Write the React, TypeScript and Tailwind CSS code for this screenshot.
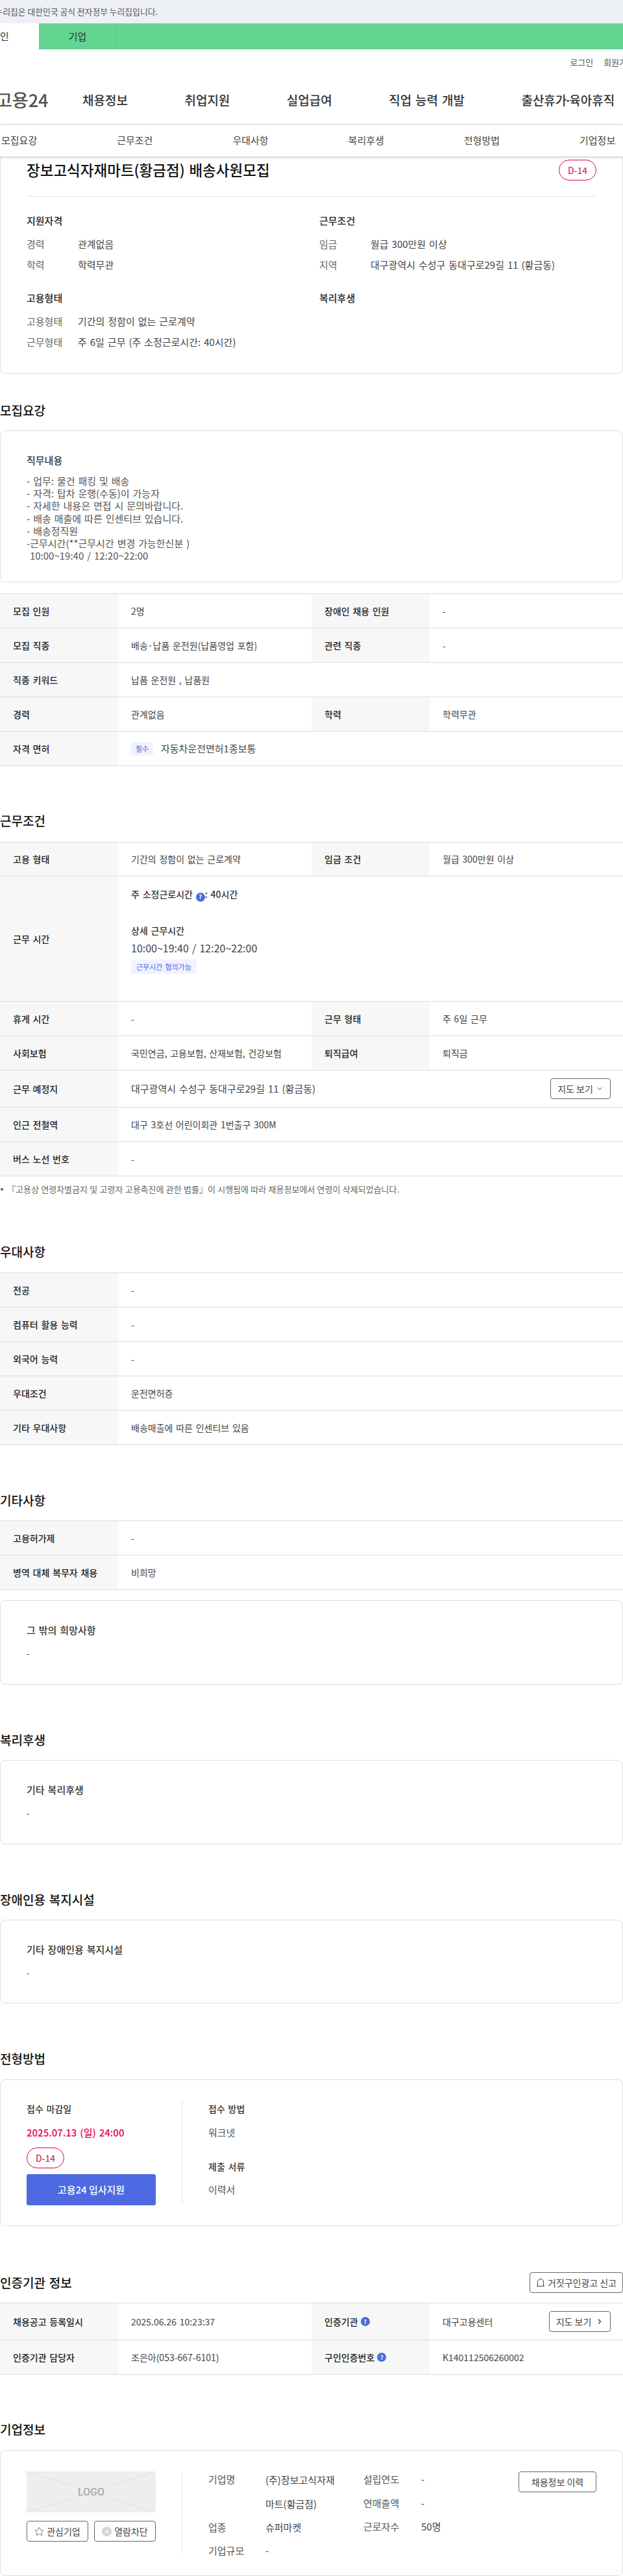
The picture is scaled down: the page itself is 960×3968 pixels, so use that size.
import type { ReactNode } from 'react'
import { ChevronDown, ChevronRight, Star } from 'lucide-react'

const KR = "font-['Noto_Sans_CJK_KR','Noto_Sans',sans-serif]"

const GNB = ['채용정보', '취업지원', '실업급여', '직업 능력 개발']
const TABS = ['모집요강', '근무조건', '우대사항', '복리후생', '전형방법', '기업정보']

function Help() {
  return (
    <span className="inline-flex h-[14px] w-[14px] items-center justify-center rounded-full bg-[#4e69e2] align-[-2px] text-[9px] font-bold leading-none text-white">?</span>
  )
}

function Heading({ children, className }: { children: ReactNode; className: string }) {
  return <h2 className={`h-[28px] text-[19px] font-medium leading-[28px] text-[#111] ${className}`}>{children}</h2>
}

function Label({ children }: { children: ReactNode }) {
  return <div className="flex items-center bg-[#f7f7f7] pl-[20px] text-[14px] font-medium text-[#222]">{children}</div>
}

function Value({ children }: { children: ReactNode }) {
  return <div className="flex items-center pl-[20px] text-[14px] text-[#444]">{children}</div>
}

function Row2({ a, b, c, d, h = 'h-[53px]' }: { a: ReactNode; b: ReactNode; c: ReactNode; d: ReactNode; h?: string }) {
  return (
    <div className={`grid grid-cols-[182px_298px_182px_298px] border-b border-[#dedede] ${h}`}>
      <Label>{a}</Label>
      <Value>{b}</Value>
      <Label>{c}</Label>
      <Value>{d}</Value>
    </div>
  )
}

function Row1({ a, children, h = 'h-[53px]' }: { a: ReactNode; children: ReactNode; h?: string }) {
  return (
    <div className={`grid grid-cols-[182px_778px] border-b border-[#dedede] ${h}`}>
      <Label>{a}</Label>
      <Value>{children}</Value>
    </div>
  )
}

function InfoLine({ k, children }: { k: string; children: ReactNode }) {
  return (
    <div className="flex h-[32px] items-center text-[15px]">
      <span className="w-[79px] text-[#666]">{k}</span>
      <span className="text-[#444]">{children}</span>
    </div>
  )
}

function TextCard({ title, h }: { title: string; h: string }) {
  return (
    <div className={`rounded-[8px] border border-[#dedede] px-[40px] pt-[34px] ${h}`}>
      <p className="h-[22px] text-[15px] font-medium leading-[22px] text-[#333]">{title}</p>
      <p className="mt-[13px] text-[14px] leading-[22px] text-[#555]">-</p>
    </div>
  )
}

function Dday({ className }: { className: string }) {
  return (
    <span className={`flex h-[32px] w-[58px] items-center justify-center rounded-[16px] border border-[#e6004e] text-[14px] text-[#e6004e] ${className}`}>D-14</span>
  )
}

function OutlineBtn({ children, className }: { children: ReactNode; className: string }) {
  return (
    <button className={`flex h-[32px] items-center justify-center rounded-[4px] border border-[#666] bg-white text-[14px] text-[#444] ${className}`}>{children}</button>
  )
}

function LogoBox() {
  return (
    <div className="relative flex h-[63px] w-[199px] items-center justify-center bg-[#eeeeee]">
      <svg className="absolute inset-0 h-full w-full" viewBox="0 0 199 63" preserveAspectRatio="none">
        <path d="M0 0L199 63M199 0L0 63" stroke="#dddddd" strokeWidth="1" />
      </svg>
      <span className="relative bg-[#eeeeee] px-[7px] font-['Roboto',sans-serif] text-[16px] font-medium leading-[20px] text-[#aaaaaa]">LOGO</span>
    </div>
  )
}

export default function App() {
  return (
    <div className={`w-[960px] overflow-hidden bg-white [word-spacing:0.1em] ${KR}`}>
      <div className="flex h-[36px] items-center overflow-hidden bg-[#edf0f5] [word-spacing:0]">
        <span className="ml-[-7.5px] whitespace-nowrap text-[12.8px] text-[#555]">누리집은 대한민국 공식 전자정부 누리집입니다.</span>
      </div>
      <div className="flex h-[40px] bg-[#62d591] text-[15px] text-[#333]">
        <div className="flex w-[60px] items-center bg-white">인</div>
        <div className="flex w-[120px] items-center justify-center border-r border-[#57c785]">기업</div>
      </div>

      <div className="flex h-[40px] items-center justify-end gap-[16px] text-[13px] text-[#555]">
        <span>로그인</span>
        <span className="mr-[-18px] whitespace-nowrap">회원가입</span>
      </div>
      <div className="flex h-[76px] items-start border-b border-[#e5e5e5] pt-[14px]">
        <span className="ml-[-6px] w-[133px] whitespace-nowrap text-[27px] font-medium leading-[48px] text-[#555]">고용24</span>
        <nav className="flex gap-[87.5px] text-[19px] font-medium leading-[48px] text-[#333]">
          {GNB.map((m) => (
            <span key={m} className="whitespace-nowrap">{m}</span>
          ))}
          <span className="whitespace-nowrap">출산휴가<span className="mx-[-3.5px]">·</span>육아휴직</span>
        </nav>
      </div>
      <div className="relative z-10 flex h-[49px] items-center gap-[123px] bg-white pl-[2px] text-[15px] text-[#444] shadow-[0_1px_4px_rgba(0,0,0,0.25)]">
        {TABS.map((t) => (
          <span key={t} className="whitespace-nowrap">{t}</span>
        ))}
      </div>

      <section className="h-[335px] rounded-b-[8px] border border-t-0 border-[#dedede] px-[40px] pt-[5px]">
        <div className="flex h-[57px] items-start justify-between border-b border-[#e5e5e5]">
          <h1 className="text-[22.5px] font-medium leading-[30px] text-[#111]">장보고식자재마트(황금점) 배송사원모집</h1>
          <Dday className="" />
        </div>
        <div className="mt-[26px] grid grid-cols-[451px_427px]">
          <div>
            <h3 className="mb-[9px] h-[22px] text-[15px] font-medium leading-[22px] text-[#222]">지원자격</h3>
            <InfoLine k="경력">관계없음</InfoLine>
            <InfoLine k="학력">학력무관</InfoLine>
            <h3 className="mb-[9px] mt-[24px] h-[22px] text-[15px] font-medium leading-[22px] text-[#222]">고용형태</h3>
            <InfoLine k="고용형태">기간의 정함이 없는 근로계약</InfoLine>
            <InfoLine k="근무형태">주 6일 근무 (주 소정근로시간: 40시간)</InfoLine>
          </div>
          <div>
            <h3 className="mb-[9px] h-[22px] text-[15px] font-medium leading-[22px] text-[#222]">근무조건</h3>
            <InfoLine k="임금">월급 300만원 이상</InfoLine>
            <InfoLine k="지역">대구광역시 수성구 동대구로29길 11 (황금동)</InfoLine>
            <h3 className="mt-[24px] h-[22px] text-[15px] font-medium leading-[22px] text-[#222]">복리후생</h3>
          </div>
        </div>
      </section>

      <Heading className="mt-[42px] mb-[17px]">모집요강</Heading>
      <section className="h-[234px] rounded-[8px] border border-[#dedede] px-[40px] pt-[34px]">
        <h3 className="h-[22px] text-[15px] font-medium leading-[22px] text-[#333]">직무내용</h3>
        <p className="mt-[11px] whitespace-pre-wrap text-[15px] leading-[19.2px] text-[#555]">{`- 업무: 물건 패킹 및 배송
- 자격: 탑차 운행(수동)이 가능자
- 자세한 내용은 면접 시 문의바랍니다.
- 배송 매출에 따른 인센티브 있습니다.
- 배송정직원
-근무시간(**근무시간 변경 가능한신분 )
 10:00~19:40 / 12:20~22:00`}</p>
      </section>

      <div className="mt-[17px] border-t border-[#dedede]">
        <Row2 a="모집 인원" b="2명" c="장애인 채용 인원" d="-" />
        <Row2 a="모집 직종" b="배송·납품 운전원(납품영업 포함)" c="관련 직종" d="-" />
        <Row1 a="직종 키워드">납품 운전원 , 납품원</Row1>
        <Row2 a="경력" b="관계없음" c="학력" d="학력무관" />
        <Row1 a="자격 면허">
          <span className="mr-[12px] flex h-[21px] w-[34px] items-center justify-center rounded-[4px] bg-[#f0f2fd] text-[11px] text-[#4e69e2]">필수</span>
          <span className="text-[15px]">자동차운전면허1종보통</span>
        </Row1>
      </div>

      <Heading className="mt-[70px] mb-[19px]">근무조건</Heading>
      <div className="border-t border-[#dedede]">
        <Row2 a="고용 형태" b="기간의 정함이 없는 근로계약" c="임금 조건" d="월급 300만원 이상" h="h-[52px]" />
        <div className="grid h-[193px] grid-cols-[182px_778px] border-b border-[#dedede]">
          <Label>근무 시간</Label>
          <div className="pl-[20px] pt-[16px] text-[14px] text-[#333]">
            <p className="h-[22px] font-medium leading-[22px]">주 소정근로시간 <Help />: 40시간</p>
            <p className="mt-[34px] h-[22px] font-medium leading-[22px]">상세 근무시간</p>
            <p className="mt-[5px] h-[22px] text-[16px] leading-[22px] text-[#444]">10:00~19:40 / 12:20~22:00</p>
            <span className="mt-[7px] inline-flex h-[22px] w-[101px] items-center justify-center rounded-[4px] bg-[#f0f2fd] text-[11px] text-[#4e69e2]">근무시간 협의가능</span>
          </div>
        </div>
        <Row2 a="휴게 시간" b="-" c="근무 형태" d="주 6일 근무" />
        <Row2 a="사회보험" b="국민연금, 고용보험, 산재보험, 건강보험" c="퇴직급여" d="퇴직금" />
        <div className="grid h-[57px] grid-cols-[182px_778px] border-b border-[#dedede]">
          <Label>근무 예정지</Label>
          <div className="flex items-center justify-between pl-[20px] pr-[19px] text-[15px] text-[#444]">
            대구광역시 수성구 동대구로29길 11 (황금동)
            <OutlineBtn className="w-[93px] gap-[4px]">지도 보기 <ChevronDown size={12} /></OutlineBtn>
          </div>
        </div>
        <Row1 a="인근 전철역">대구 3호선 어린이회관 1번출구 300M</Row1>
        <Row1 a="버스 노선 번호">-</Row1>
      </div>
      <p className="mt-[10px] flex h-[20px] items-center gap-[6px] whitespace-nowrap pl-[1px] text-[13px] leading-[20px] text-[#666] [word-spacing:0.03em]">
        <span className="h-[4px] w-[4px] rounded-full bg-[#666]" />
        『고용상 연령차별금지 및 고령자 고용촉진에 관한 법률』이 시행됨에 따라 채용정보에서 연령이 삭제되었습니다.
      </p>

      <Heading className="mt-[72px] mb-[18px]">우대사항</Heading>
      <div className="border-t border-[#dedede]">
        <Row1 a="전공">-</Row1>
        <Row1 a="컴퓨터 활용 능력">-</Row1>
        <Row1 a="외국어 능력">-</Row1>
        <Row1 a="우대조건">운전면허증</Row1>
        <Row1 a="기타 우대사항">배송매출에 따른 인센티브 있음</Row1>
      </div>

      <Heading className="mt-[71px] mb-[17px]">기타사항</Heading>
      <div className="border-t border-[#dedede]">
        <Row1 a="고용허가제">-</Row1>
        <Row1 a="병역 대체 복무자 채용">비희망</Row1>
      </div>
      <div className="mt-[16px]"><TextCard title="그 밖의 희망사항" h="h-[130px]" /></div>

      <Heading className="mt-[71px] mb-[17px]">복리후생</Heading>
      <TextCard title="기타 복리후생" h="h-[130px]" />

      <Heading className="mt-[71px] mb-[17px]">장애인용 복지시설</Heading>
      <TextCard title="기타 장애인용 복지시설" h="h-[129px]" />

      <Heading className="mt-[71px] mb-[18px]">전형방법</Heading>
      <section className="flex h-[226px] rounded-[8px] border border-[#dedede] pl-[40px] pt-[31px]">
        <div className="h-[161px] w-[240px] border-r border-[#e5e5e5]">
          <p className="mt-[2px] h-[22px] text-[14px] font-medium leading-[22px] text-[#333]">접수 마감일</p>
          <p className="mt-[15px] h-[22px] text-[15px] font-medium leading-[22px] text-[#e6004e]">2025.07.13 (일) 24:00</p>
          <Dday className="mt-[12px]" />
          <button className="mt-[9px] h-[48px] w-[199px] rounded-[3px] bg-[#4e69e2] text-[15px] font-medium text-white">고용24 입사지원</button>
        </div>
        <div className="pl-[40px] text-[15px]">
          <p className="mt-[2px] h-[22px] text-[14px] font-medium leading-[22px] text-[#333]">접수 방법</p>
          <p className="mt-[15px] h-[22px] leading-[22px] text-[#555]">워크넷</p>
          <p className="mt-[30px] h-[22px] text-[14px] font-medium leading-[22px] text-[#333]">제출 서류</p>
          <p className="mt-[14px] h-[22px] leading-[22px] text-[#555]">이력서</p>
        </div>
      </section>

      <div className="mt-[71px] mb-[15px] flex h-[32px] items-center justify-between">
        <h2 className="text-[19px] font-medium leading-[28px] text-[#111]">인증기관 정보</h2>
        <OutlineBtn className="w-[144px] gap-[4px]">
          <svg width="14" height="14" viewBox="0 0 14 14" fill="none" stroke="#444" strokeWidth="1">
            <path d="M1 12.5h12M2.5 12.5V6a4.5 4.5 0 0 1 9 0v6.5M7 1.5V.5" />
          </svg>
          거짓구인광고 신고
        </OutlineBtn>
      </div>
      <div className="border-t border-[#dedede]">
        <div className="grid h-[57px] grid-cols-[182px_298px_182px_298px] border-b border-[#dedede]">
          <Label>채용공고 등록일시</Label>
          <Value>2025.06.26 10:23:37</Value>
          <Label><span className="mr-[4px]">인증기관</span><Help /></Label>
          <div className="flex items-center justify-between pl-[20px] pr-[19px] text-[14px] text-[#444]">
            대구고용센터
            <OutlineBtn className="w-[95px] gap-[7px]">지도 보기 <ChevronRight size={12} strokeWidth={3} /></OutlineBtn>
          </div>
        </div>
        <Row2
          a="인증기관 담당자"
          b="조은아(053-667-6101)"
          c={<><span className="mr-[4px]">구인인증번호</span><Help /></>}
          d="K140112506260002"
        />
      </div>

      <Heading className="mt-[70px] mb-[18px]">기업정보</Heading>
      <section className="flex h-[194px] rounded-[8px] border border-[#dedede] pl-[40px] pt-[32px]">
        <div className="w-[199px]">
          <LogoBox />
          <div className="mt-[13px] flex gap-[9px]">
            <OutlineBtn className="w-[95px] gap-[4px]"><Star size={15} strokeWidth={1.2} />관심기업</OutlineBtn>
            <OutlineBtn className="w-[95px] gap-[4px]">
              <svg width="15" height="15" viewBox="0 0 15 15">
                <circle cx="7.5" cy="7.5" r="7.5" fill="#d5d5d5" />
                <path d="M4.8 4.8l5.4 5.4M10.2 4.8l-5.4 5.4" stroke="#fff" strokeWidth="1.2" />
              </svg>
              열람차단
            </OutlineBtn>
          </div>
        </div>
        <div className="ml-[40px] h-[128px] w-px bg-[#e5e5e5]" />
        <div className="ml-[40px] w-[239px] text-[15px] text-[#555]">
          <div className="flex">
            <span className="w-[88px] shrink-0 leading-[24px]">기업명</span>
            <span className="mt-[-6px] w-[110px] leading-[37px] text-[#444]">(주)장보고식자재마트(황금점)</span>
          </div>
          <div className="mt-[6px] flex h-[36px] items-start leading-[24px]">
            <span className="w-[88px]">업종</span>
            <span className="text-[#444]">슈퍼마켓</span>
          </div>
          <div className="flex leading-[24px]">
            <span className="w-[88px]">기업규모</span>
            <span className="text-[#444]">-</span>
          </div>
        </div>
        <div className="w-[239px] text-[15px] leading-[24px] text-[#555]">
          <div className="flex h-[37px]"><span className="w-[89px]">설립연도</span><span className="text-[#444]">-</span></div>
          <div className="flex h-[36px]"><span className="w-[89px]">연매출액</span><span className="text-[#444]">-</span></div>
          <div className="flex"><span className="w-[89px]">근로자수</span><span className="text-[#444]">50명</span></div>
        </div>
        <OutlineBtn className="w-[120px]">채용정보 이력</OutlineBtn>
      </section>
    </div>
  )
}
